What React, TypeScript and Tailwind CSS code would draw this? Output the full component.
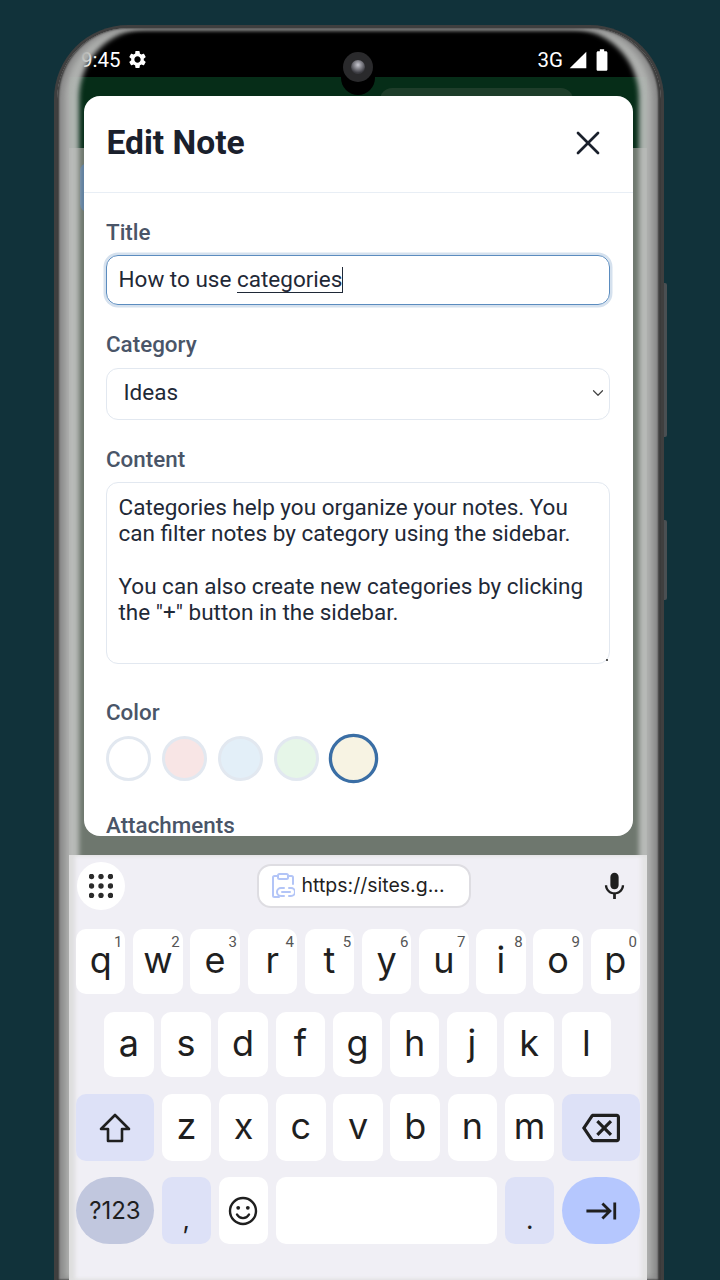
import { ReactNode } from 'react'
import { ChevronDown, X } from 'lucide-react'
import {
  MdSettings,
  MdSignalCellular4Bar,
  MdBatteryFull,
  MdMic,
  MdKeyboardTab,
  MdOutlineBackspace,
} from 'react-icons/md'

const row1 = [
  ['q', '1'],
  ['w', '2'],
  ['e', '3'],
  ['r', '4'],
  ['t', '5'],
  ['y', '6'],
  ['u', '7'],
  ['i', '8'],
  ['o', '9'],
  ['p', '0'],
]
const row2 = ['a', 's', 'd', 'f', 'g', 'h', 'j', 'k', 'l']
const row3 = ['z', 'x', 'c', 'v', 'b', 'n', 'm']

const swatches = ['bg-white', 'bg-[#f8e5e5]', 'bg-[#e3eff8]', 'bg-[#e6f6e8]']

function Key({ label, hint }: { label: string; hint?: string }) {
  return (
    <div className="relative flex h-full w-[49.5px] items-center justify-center rounded-[10px] bg-white text-[36px] leading-none text-[#1f1f1f]">
      <span className="-mt-[4px]">{label}</span>
      {hint && <span className="absolute top-[1px] right-[3px] font-['Roboto',sans-serif] text-[15px] leading-[24px] text-[#555]">{hint}</span>}
    </div>
  )
}

function Fn({ children, className }: { children: ReactNode; className: string }) {
  return <div className={`flex h-full items-center justify-center text-[#1f1f1f] ${className}`}>{children}</div>
}

function Label({ children, className }: { children: ReactNode; className: string }) {
  return <div className={`text-[22.4px] font-medium leading-[28px] text-[#4a5568] ${className}`}>{children}</div>
}

function Keyboard() {
  return (
    <div className="relative z-[11] flex h-[425px] flex-col bg-[#f0eff5] px-[7px] shadow-[inset_6px_0_4px_#dedede,inset_-6px_0_4px_#e4e4e4]">
      <div className="flex h-[74px] shrink-0 items-center justify-between pb-[12px] pl-[1px] pr-[9px]">
        <div className="flex h-[48px] w-[48px] items-center justify-center rounded-full bg-white">
          <svg width="24" height="24" viewBox="0 0 24 24" fill="#2b2b2b">
            {[2.5, 12, 21.5].map((y) =>
              [2.5, 12, 21.5].map((x) => <circle key={`${x}-${y}`} cx={x} cy={y} r="2.7" />),
            )}
          </svg>
        </div>
        <div className="ml-[4px] flex h-[44px] w-[214px] items-center gap-[7px] rounded-[14px] border-2 border-[#dedde2] bg-white pl-[12px] font-['Inter',sans-serif] text-[19.5px] text-[#1f1f1f]">
          <svg width="24" height="26" viewBox="0 0 24 26" fill="none" stroke="#b3c5f7" strokeWidth="2" strokeLinecap="round" strokeLinejoin="round">
            <path d="M7 3H3.5A1.5 1.5 0 0 0 2 4.5v18A1.5 1.5 0 0 0 3.5 24H8" />
            <path d="M17 3h3.5A1.5 1.5 0 0 1 22 4.5V11" />
            <rect x="7" y="1" width="10" height="5" rx="1.5" />
            <path d="M13 15h-3a3.5 3.5 0 0 0 0 8h3" />
            <path d="M18 15h2a3.5 3.5 0 0 1 0 8h-2" />
            <path d="M11 19h8" />
          </svg>
          <span>https://sites.g...</span>
        </div>
        <MdMic size={33} className="text-[#1f1f1f]" />
      </div>
      <div className="flex flex-col font-['Inter',sans-serif]">
        <div className="flex h-[65px] gap-[7.7px]">
          {row1.map(([k, n]) => (
            <Key key={k} label={k} hint={n} />
          ))}
        </div>
        <div className="mt-[18px] flex h-[65px] gap-[7.7px] pl-[28px]">
          {row2.map((k) => (
            <Key key={k} label={k} />
          ))}
        </div>
        <div className="mt-[17px] flex h-[67px] gap-[7.7px]">
          <Fn className="w-[78px] rounded-[10px] bg-[#dde1f7]">
            <svg width="32" height="30" viewBox="0 0 32 30" fill="none" stroke="#1f1f1f" strokeWidth="2.6" strokeLinejoin="round">
              <path d="M16 2 L30 16 H23 V28 H9 V16 H2 Z" />
            </svg>
          </Fn>
          {row3.map((k) => (
            <Key key={k} label={k} />
          ))}
          <Fn className="w-[78px] rounded-[10px] bg-[#dde1f7]">
            <MdOutlineBackspace size={38} />
          </Fn>
        </div>
        <div className="mt-[16px] flex h-[67px] gap-[7.7px]">
          <Fn className="w-[78px] rounded-[40px] bg-[#c1c7de] text-[24px]">?123</Fn>
          <Fn className="w-[49.5px] rounded-[10px] bg-[#dde1f7] pt-[17px] text-[26px]">,</Fn>
          <Fn className="w-[49.5px] rounded-[10px] bg-white">
            <svg width="30" height="30" viewBox="0 0 30 30" fill="none" stroke="#1f1f1f" strokeWidth="2.4" strokeLinecap="round">
              <circle cx="15" cy="15" r="13" />
              <circle cx="10.2" cy="11.8" r="1.9" fill="#1f1f1f" stroke="none" />
              <circle cx="19.8" cy="11.8" r="1.9" fill="#1f1f1f" stroke="none" />
              <path d="M9 18.5c1.4 2.4 3.4 3.6 6 3.6s4.6-1.2 6-3.6" />
            </svg>
          </Fn>
          <div className="h-full w-[222px] rounded-[10px] bg-white" />
          <Fn className="w-[49.5px] rounded-[10px] bg-[#dde1f7] pt-[17px] text-[26px]">.</Fn>
          <Fn className="w-[78px] rounded-[40px] bg-[#b5c7fe] pl-[2px]">
            <MdKeyboardTab size={34} />
          </Fn>
        </div>
      </div>
    </div>
  )
}

function EditNote() {
  return (
    <div className="absolute left-[15px] top-[19px] z-20 h-[740px] w-[549px] overflow-hidden rounded-[16px] bg-white">
      <div className="flex h-[97px] items-center justify-between border-b border-[#e8eef5] pb-[2px] pl-[22.5px] pr-[25px]">
        <h2 className="text-[33.6px] font-bold text-[#1a202c]">Edit Note</h2>
        <X size={40} strokeWidth={1.6} className="text-[#1a202c]" />
      </div>
      <div className="pl-[22px] pr-[23px] text-[#1f2937]">
        <Label className="mt-[25px]">Title</Label>
        <div className="mt-[9px] flex h-[50px] items-center rounded-[12px] border-[1.5px] border-[#5b8cbf] pl-[11.5px] text-[22.5px] shadow-[0_0_0_2.5px_#d5e1ee]">
          <span>
            How to use <span className="border-b border-[#1f2937]">categories</span>
          </span>
          <span className="h-[26px] w-px bg-[#1f2937]" />
        </div>
        <Label className="mt-[25px]">Category</Label>
        <div className="relative mt-[10px]">
          <select
            defaultValue="Ideas"
            className="block h-[52px] w-full appearance-none rounded-[12px] border border-[#e2e8f0] bg-white pb-[2px] pl-[16.5px] text-[22.5px]"
          >
            <option>Ideas</option>
          </select>
          <ChevronDown size={18} strokeWidth={1.6} className="pointer-events-none absolute right-[3px] top-[16px] text-[#444]" />
        </div>
        <Label className="mt-[25px]">Content</Label>
        <div className="relative mt-[9px]">
          <textarea
            readOnly
            defaultValue={
              'Categories help you organize your notes. You can filter notes by category using the sidebar.\n\nYou can also create new categories by clicking the "+" button in the sidebar.'
            }
            className="block h-[182px] w-full resize-none rounded-[12px] border border-[#e2e8f0] px-[11.5px] py-[11px] text-[22.5px] leading-[26.25px] outline-none"
          />
          <div className="pointer-events-none absolute bottom-[3px] right-[2px] h-[2px] w-[2px] bg-[#555]" />
        </div>
        <Label className="mt-[34px]">Color</Label>
        <div className="mt-[10px] flex gap-[11px]">
          {swatches.map((c) => (
            <div key={c} className={`h-[45px] w-[45px] rounded-full border-[3px] border-[#e2e8f0] ${c}`} />
          ))}
          <div className="ml-[1px] h-[45px] w-[45px] scale-110 rounded-full border-[3px] border-[#3a6ea5] bg-[#f7f3e3]" />
        </div>
        <Label className="mt-[30px]">Attachments</Label>
      </div>
    </div>
  )
}

export default function App() {
  return (
    <div className="h-[1280px] w-[720px] overflow-hidden bg-[#11323a] pl-[54px] pt-[25px] font-['Roboto',sans-serif]">
      <div className="relative h-[1255px] w-[610px]">
        {/* side buttons */}
        <div className="absolute left-[608px] top-[258px] h-[154px] w-[5px] rounded-r-[2px] bg-[#4a4f52]" />
        <div className="absolute left-[608px] top-[495px] h-[80px] w-[5px] rounded-r-[2px] bg-[#4a4f52]" />

        <div className="relative flex h-full flex-col overflow-hidden rounded-t-[74px] border-[3px] border-b-0 border-[#3f3f3f] bg-black pl-[12px] pr-[14px]">
          <div className="flex h-[49px] shrink-0 items-center justify-between pl-[12px] pr-[38px] pt-[14px] text-[20.5px] text-white">
            <div className="flex items-center gap-[6px]">
              <span className="pt-[2px]">9:45</span>
              <MdSettings size={21} />
            </div>
            <div className="flex items-center gap-[5px]">
              <span className="pt-[2px]">3G</span>
              <MdSignalCellular4Bar size={20} />
              <MdBatteryFull size={26} className="-ml-[4px] -mr-[6px]" />
            </div>
          </div>

          <div className="relative flex flex-1 flex-col">
            <div className="h-[71px] shrink-0 bg-[#062d18] pl-[311px] pt-[11px]">
              <div className="h-[60px] w-[193px] rounded-t-[12px] bg-[#1e3d2a]" />
            </div>
            <div className="h-[707px] shrink-0 bg-[#6e776e] pl-[11px] pt-[15px]">
              <div className="h-[49px] w-[10px] rounded-l-[8px] bg-[#5f7f9f]" />
            </div>
            <Keyboard />
            <EditNote />
          </div>

          {/* glass edge over the screen */}
          <div className="pointer-events-none absolute inset-0 z-10 rounded-t-[70px] shadow-[inset_2px_0_2px_#3a3a3a,inset_-3px_0_2px_#3a3a3a,inset_8px_0_6px_#8a8a8a,inset_-9px_0_6px_#8a8a8a,inset_22px_0_5px_rgba(190,192,190,0.92),inset_-22px_0_5px_rgba(190,192,190,0.92)]" />

          {/* camera */}
          <div className="absolute left-[284px] top-[24px] z-10 flex h-[43px] w-[34px] items-start justify-center rounded-b-[17px] bg-black">
            <div className="flex h-[30px] w-[30px] items-center justify-center rounded-full bg-[#2a2a2c]">
              <div className="h-[14px] w-[14px] rounded-full bg-[radial-gradient(circle_at_50%_35%,#c8c8d0,#3a3a40_70%)]" />
            </div>
          </div>
        </div>
      </div>
    </div>
  )
}
